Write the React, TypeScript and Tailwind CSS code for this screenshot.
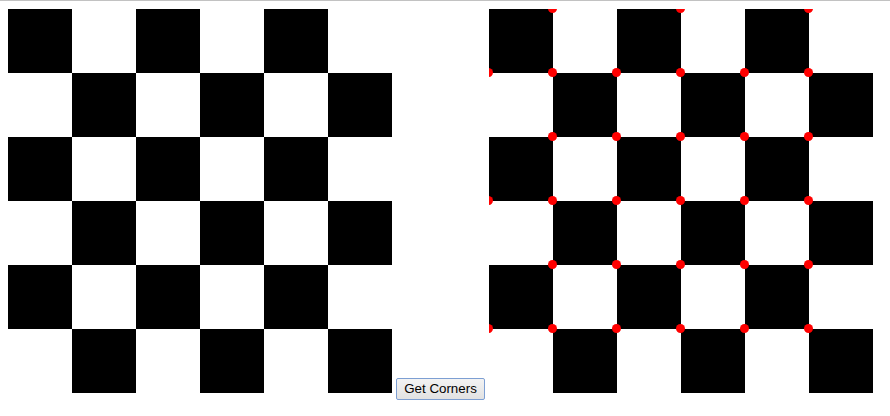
const SIZE = 64;
const N = 6;

// corner points found on the right board, in canvas px
const corners: [number, number][] = [
  [64, 0], [192, 0], [320, 0],
  [0, 64], [64, 64], [128, 64], [192, 64], [256, 64], [320, 64],
  [64, 128], [128, 128], [192, 128], [256, 128], [320, 128],
  [0, 192], [64, 192], [128, 192], [192, 192], [256, 192], [320, 192],
  [64, 256], [128, 256], [192, 256], [256, 256], [320, 256],
  [0, 320], [64, 320], [128, 320], [192, 320], [256, 320], [320, 320],
];

function Board({ dots }: { dots?: boolean }) {
  const cells = [];
  for (let r = 0; r < N; r++) {
    for (let c = 0; c < N; c++) {
      if ((r + c) % 2 === 0) {
        cells.push(<rect key={`${r}-${c}`} x={c * SIZE} y={r * SIZE} width={SIZE} height={SIZE} fill="#000" />);
      }
    }
  }
  return (
    <svg width={384} height={384} viewBox="0 0 384 384" className="block shrink-0 bg-white">
      {cells}
      {dots &&
        corners.map(([x, y]) => <circle key={`${x}-${y}`} cx={x - 0.5} cy={y - 0.5} r={4.5} fill="#ff0000" />)}
    </svg>
  );
}

export default function App() {
  return (
    <div className="min-h-[416px] w-[890px] overflow-hidden border-t border-[#c2c2c2] bg-white px-2 pt-2 font-['Liberation_Sans',Arial,sans-serif]">
      <div className="flex items-baseline gap-1">
        <Board />
        <button
          type="button"
          className="h-[22px] w-[89px] shrink-0 rounded-[2px] border border-[#7d9fd3] bg-gradient-to-b from-[#f3f3f3] to-[#e2e2e2] text-[13.33px] leading-none text-black"
        >
          Get Corners
        </button>
        <Board dots />
      </div>
    </div>
  );
}
